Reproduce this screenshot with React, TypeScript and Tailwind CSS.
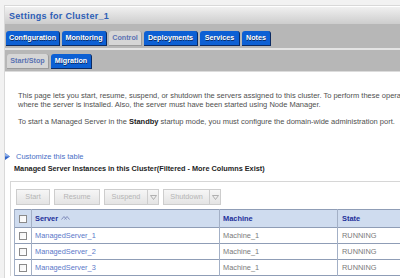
import React from "react";

const tabs = [
  { label: "Configuration", w: "w-[54px]" },
  { label: "Monitoring", w: "w-[45px]" },
  { label: "Control", w: "w-[33px]", active: true },
  { label: "Deployments", w: "w-[54px]" },
  { label: "Services", w: "w-[40px]" },
  { label: "Notes", w: "w-[29px]" },
];

const subTabs = [
  { label: "Start/Stop", w: "w-[42px]", active: true },
  { label: "Migration", w: "w-[41px]" },
];

function Tab({ label, w, active }: { label: string; w: string; active?: boolean }) {
  return (
    <div
      className={
        active
          ? `${w} h-[15px] rounded-t-[3px] bg-[#d6d6d6] border-r border-b border-[#9c9c9c] text-[#5b73b3] font-bold text-[7.2px] flex items-center justify-center`
          : `${w} h-[15px] rounded-t-[3px] bg-[#0d60d4] border-r-[1.5px] border-b border-[#0b2a62] text-white font-bold text-[7.2px] flex items-center justify-center [text-shadow:0.5px_0.5px_0_#0b2a62]`
      }
    >
      {label}
    </div>
  );
}

function Checkbox() {
  return (
    <div className="w-[8px] h-[8px] border border-[#8a8a8a] bg-gradient-to-br from-[#f4f4f4] to-white mx-auto" />
  );
}

function Btn({ label, w, menu }: { label: string; w: string; menu?: boolean }) {
  return (
    <div className="flex h-[16px] border border-[#cdcdcd] bg-gradient-to-b from-[#f6f6f6] to-[#e4e4e4] text-[#b5b5b5] text-[7.3px]">
      <div className={`${w} flex items-center justify-center`}>{label}</div>
      {menu && (
        <div className="w-[11px] border-l border-[#cdcdcd] flex items-center justify-center">
          <svg width="7" height="5" viewBox="0 0 7 5">
            <path d="M0.5 0.5 L6.5 0.5 L3.5 4.5 Z" fill="none" stroke="#a8a8a8" strokeWidth="0.9" />
          </svg>
        </div>
      )}
    </div>
  );
}

const rows = ["ManagedServer_1", "ManagedServer_2", "ManagedServer_3"];

export default function App() {
  return (
    <div className="w-[400px] h-[278px] overflow-hidden bg-[#f2f2f2] font-['Liberation_Sans',Arial,sans-serif]">
      <div className="ml-[4px] mt-[5px] h-[273px] bg-white border-l border-t border-[#d9d9d9] overflow-hidden">
        {/* title */}
        <div className="h-[18px] border-t border-white bg-gradient-to-b from-[#f0f0f0] to-[#cdcdcd] flex items-center pl-[4px] pt-[2px] text-[9px] font-bold text-[#2c5db6] tracking-[0.3px]">
          Settings for Cluster_1
        </div>

        {/* main tabs */}
        <div className="h-[24px] bg-[#b7b7b7] flex items-end gap-[2px] pl-[1px] pb-[2px]">
          {tabs.map((t) => (
            <Tab key={t.label} {...t} />
          ))}
        </div>
        <div className="h-[2px] bg-[#e4e4e4]" />

        {/* sub tabs */}
        <div className="h-[22px] bg-[#b7b7b7] flex items-end gap-[2px] pl-[2px] pb-[2px] border-b border-[#dcdcdc]">
          {subTabs.map((t) => (
            <Tab key={t.label} {...t} />
          ))}
        </div>

        {/* text */}
        <div className="pl-[13px] pt-[19px] text-[7.5px] leading-[9px] text-[#4f4f4f] whitespace-nowrap">
          <p>
            This page lets you start, resume, suspend, or shutdown the servers assigned to this cluster. To perform these operations, the Node Manager must be running on the machine
            <br />
            where the server is installed. Also, the server must have been started using Node Manager.
          </p>
          <p className="mt-[8px]">
            To start a Managed Server in the <span className="font-bold text-[#222]">Standby</span> startup mode, you must configure the domain-wide administration port.
          </p>
        </div>

        <div className="mt-[26px] flex items-center gap-[6px] text-[7.5px] leading-[9px] text-[#4a6fc6]">
          <svg width="5" height="7" viewBox="0 0 5 7">
            <path d="M0 0 L5 3.5 L0 7 Z" fill="#2f63c9" />
            <path d="M0 0 L5 3.5 L0 3.5 Z" fill="#8fb0ea" />
          </svg>
          <span>Customize this table</span>
        </div>

        <div className="mt-[3px] pl-[9px] text-[7.3px] leading-[9px] font-bold text-[#1e1e1e] whitespace-nowrap">
          Managed Server Instances in this Cluster(Filtered - More Columns Exist)
        </div>

        {/* table box */}
        <div className="mt-[8px] ml-[5px] border-l border-t border-[#d6d6d6] bg-white pt-[7px] pl-[5px]">
          <div className="flex gap-[4px]">
            <Btn label="Start" w="w-[32px]" />
            <Btn label="Resume" w="w-[44px]" />
            <Btn label="Suspend" w="w-[42px]" menu />
            <Btn label="Shutdown" w="w-[45px]" menu />
          </div>

          <table className="mt-[4px] -ml-[2px] table-fixed w-[443px] border-collapse text-[7.4px] whitespace-nowrap">
            <colgroup>
              <col className="w-[17px]" />
              <col className="w-[188px]" />
              <col className="w-[118px]" />
              <col className="w-[120px]" />
            </colgroup>
            <thead>
              <tr className="h-[18px] bg-[#cfdcef] border-t border-b border-[#8f9db6]">
                <th className="border-l border-r border-[#a3b0c6]">
                  <Checkbox />
                </th>
                <th className="border-r border-[#a3b0c6] text-left pl-[3px] font-bold text-[#23309a]">
                  <span className="inline-flex items-center gap-[3px]">
                    Server
                    <svg width="9" height="6" viewBox="0 0 9 6">
                      <path d="M0.5 4.5 L3 1.5 L5.5 4.5" fill="none" stroke="#7a87b8" strokeWidth="0.9" />
                      <path d="M3.5 4.5 L6 1.5 L8.5 4.5" fill="none" stroke="#7a87b8" strokeWidth="0.9" />
                    </svg>
                  </span>
                </th>
                <th className="border-r border-[#a3b0c6] text-left pl-[3px] font-bold text-[#23309a]">Machine</th>
                <th className="text-left pl-[4px] font-bold text-[#23309a]">State</th>
              </tr>
            </thead>
            <tbody>
              {rows.map((r) => (
                <tr key={r} className="h-[16px] border-b border-[#8f9db6]">
                  <td className="border-l border-r border-[#a3b0c6]">
                    <Checkbox />
                  </td>
                  <td className="border-r border-[#a3b0c6] pl-[3px] text-[#5b78c9]">{r}</td>
                  <td className="border-r border-[#a3b0c6] pl-[3px] text-[#7a7a7a]">Machine_1</td>
                  <td className="pl-[4px] text-[#7a7a7a]">RUNNING</td>
                </tr>
              ))}
            </tbody>
          </table>
        </div>
      </div>
    </div>
  );
}
